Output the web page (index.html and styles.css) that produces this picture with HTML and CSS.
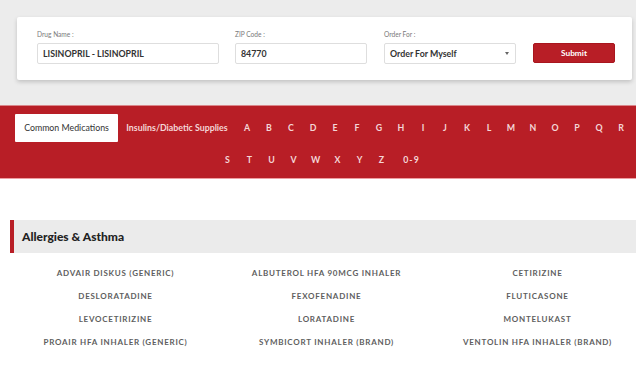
FILE: index.html
```html
<!DOCTYPE html>
<html>
<head>
<meta charset="utf-8">
<link rel="stylesheet" href="styles.css">
</head>
<body>
<div class="top">
  <form class="card">
    <div class="field field-drug">
      <label class="label">Drug Name :</label>
      <div class="input">LISINOPRIL - LISINOPRIL</div>
    </div>
    <div class="field field-zip">
      <label class="label">ZIP Code :</label>
      <div class="input">84770</div>
    </div>
    <div class="field field-order">
      <label class="label">Order For :</label>
      <div class="input select">Order For Myself<span class="caret"></span></div>
    </div>
    <button class="submit" type="button">Submit</button>
  </form>
</div>
<nav class="nav">
  <div class="nav-inner">
    <a class="tab active">Common Medications</a>
    <a class="tab insulins">Insulins/Diabetic Supplies</a>
    <a class="letter">A</a><a class="letter">B</a><a class="letter">C</a><a class="letter">D</a><a class="letter">E</a><a class="letter">F</a><a class="letter">G</a><a class="letter">H</a><a class="letter">I</a><a class="letter">J</a><a class="letter">K</a><a class="letter">L</a><a class="letter">M</a><a class="letter">N</a><a class="letter">O</a><a class="letter">P</a><a class="letter">Q</a><a class="letter">R</a><a class="letter">S</a><a class="letter">T</a><a class="letter">U</a><a class="letter">V</a><a class="letter">W</a><a class="letter">X</a><a class="letter">Y</a><a class="letter">Z</a><a class="letter num">0-9</a>
  </div>
</nav>
<section class="section">
  <h2 class="section-title">Allergies &amp; Asthma</h2>
  <ul class="drug-grid">
    <li>ADVAIR DISKUS (GENERIC)</li>
    <li>ALBUTEROL HFA 90MCG INHALER</li>
    <li>CETIRIZINE</li>
    <li>DESLORATADINE</li>
    <li>FEXOFENADINE</li>
    <li>FLUTICASONE</li>
    <li>LEVOCETIRIZINE</li>
    <li>LORATADINE</li>
    <li>MONTELUKAST</li>
    <li>PROAIR HFA INHALER (GENERIC)</li>
    <li>SYMBICORT INHALER (BRAND)</li>
    <li>VENTOLIN HFA INHALER (BRAND)</li>
  </ul>
</section>
</body>
</html>
```
FILE: styles.css
```css
* { box-sizing: border-box; }
html, body { margin: 0; padding: 0; background: #fff; overflow: hidden; }
body { font-family: "Lato", "Open Sans", sans-serif; color: #222; }

.top {
  background: #ececec;
  padding: 17px 4px 25px 17px;
}
.card {
  background: #fff;
  border-radius: 2px;
  box-shadow: 0 2px 4px rgba(0,0,0,0.18);
  display: flex;
  align-items: flex-end;
  gap: 16px;
  padding: 13px 15px 16px 20px;
  margin: 0;
}
.field { display: flex; flex-direction: column; }
.field-drug { width: 182px; }
.field-zip { width: 132px; }
.field-order { width: 132px; margin-left: 1px; margin-right: 1px; }
.label {
  font-size: 6.6px;
  line-height: 8px;
  color: #7a7a7a;
  margin-bottom: 5px;
}
.input {
  height: 21px;
  border: 1px solid #dedede;
  border-radius: 2px;
  font-size: 8.8px;
  font-weight: 700;
  color: #333;
  line-height: 19px;
  padding: 0 5px;
  position: relative;
  white-space: nowrap;
}
.select .caret {
  position: absolute;
  right: 6px;
  top: 8px;
  width: 0; height: 0;
  border-left: 2.5px solid transparent;
  border-right: 2.5px solid transparent;
  border-top: 3px solid #666;
}
.submit {
  width: 82px;
  height: 20px;
  margin-bottom: 1px;
  background: #b81e26;
  color: #fff;
  border: 1px solid #a8161e;
  border-radius: 2px;
  font-family: inherit;
  font-size: 8.3px;
  font-weight: 700;
  padding: 0;
}

.nav {
  background: #b81e26;
  border-top: 1px solid #d9868a;
  border-bottom: 1px solid #ee9ea1;
}
.nav-inner {
  display: flex;
  flex-wrap: wrap;
  justify-content: center;
  row-gap: 4px;
  padding: 8px 3px 4px 14px;
}
.nav a {
  display: block;
  height: 28px;
  line-height: 28px;
  font-size: 8.8px;
  font-weight: 700;
  color: #f4d6d7;
  text-align: center;
  white-space: nowrap;
}
.tab.active {
  width: 103px;
  background: #fff;
  color: #333;
  font-weight: 400;
  border-radius: 1px;
}
.tab.insulins { width: 118px; }
.letter { width: 22px; }
.letter.num { width: 38px; letter-spacing: 1px; }

.section {
  margin: 41px 0 0 10px;
  overflow: hidden;
}
.section-title {
  margin: 0;
  height: 33px;
  line-height: 33px;
  background: #ebebeb;
  border-left: 4px solid #b81e26;
  padding-left: 8px;
  font-size: 12px;
  font-weight: 900;
  color: #222;
}
.drug-grid {
  list-style: none;
  margin: 9px 0 0 0;
  padding: 0;
  display: grid;
  grid-template-columns: repeat(3, 211px);
  grid-auto-rows: 23px;
}
.drug-grid li {
  text-align: center;
  line-height: 23px;
  font-size: 8px;
  font-weight: 700;
  letter-spacing: 0.75px;
  color: #5e5e5e;
  white-space: nowrap;
}
```
